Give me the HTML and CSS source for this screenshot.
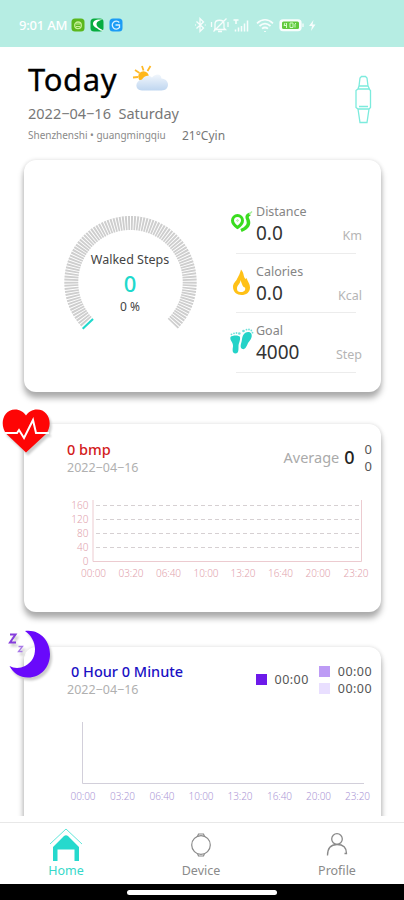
FILE: index.html
```html
<!DOCTYPE html>
<html lang="en">
<head>
<meta charset="utf-8">
<title>Today</title>
<link rel="stylesheet" href="styles.css">
</head>
<body>
<div class="phone">
  <header class="status">
    <span class="clock">9:01 AM</span>
    <svg class="apps" width="52" height="14" viewBox="0 0 52 14">
      <rect x=".5" y=".5" width="13" height="13" rx="3.5" fill="#5bb71d"/><circle cx="7" cy="7.3" r="3.3" fill="none" stroke="#c8f09a" stroke-width="1.3"/><path d="M5 6h4M5 8.5h4" stroke="#c8f09a"/>
      <rect x="19.500" y=".5" width="13" height="13" rx="3.500" fill="#06ac3f"/><path d="M31.500 1.500C24 1 22 3 22 6c0 3 4 3.500 5.500 5.500 2 1.500 4 1.500 5 1-5-2.500-7-4-7-6.500 0-2.500 3-3.500 6-4.500z" fill="#fff"/>
      <rect x="38.500" y=".5" width="13" height="13" rx="3.500" fill="#1c9cf5"/><path d="M48.300 4.500a4 4 0 1 0 0 5.200M44.500 7h4v3" fill="none" stroke="#d6f0ff" stroke-width="1.300"/>
    </svg>
    <svg class="signals" width="124" height="16" viewBox="0 0 124 16" fill="none" stroke="#fff" stroke-width="1.300">
      <path d="M2.500 4.500l7 6.500-3.500 3.500v-13l3.500 3.500-7 6.500M1 8h.8M10.800 8h.8"/>
      <path d="M21 12.500V7c0-5 9-5 9 0v4l1.500 1.500H20M24 14.500h4M19.500 14.500l13-13M17.500 5v5M34 5v5"/>
      <path d="M39.500 3h5M42 3v4M47.500 14.500V9M44.500 14.500v-4M41.500 14.500v-2M50.500 14.500V6.500M53.500 14.500v-11" stroke-width="1.500"/>
      <path d="M63 6.300c5-4.500 11-4.500 16 0M65.500 9c3.500-3 7.500-3 11 0M68 11.700c2-1.600 4-1.600 6 0M71 14v1" stroke-width="1.700"/>
      <rect x="86" y="3" width="21" height="10.500" rx="3" fill="#fff"/><rect x="88" y="4.500" width="17" height="7.500" rx="1.500" fill="#58c62c" stroke="none"/><path d="M91 6l-1 2.500h3M92.500 6v5M96 6h3v4.500h-3zM101 10.500V7l1-1" stroke="#d7ffc5" stroke-width="1"/><path d="M109 6.500v3.500"/>
      <path d="M119.500 3l-4.500 6h3l-1 5 4.500-6.500h-3z" fill="#fff" stroke="none"/>
    </svg>
  </header>

  <section class="hero">
    <div>
      <div class="title-row"><h1>Today</h1>
        <svg width="38" height="28" viewBox="0 0 38 28">
          <defs><linearGradient id="cloud" x2="0" y2="1"><stop stop-color="#f1f6fc"/><stop offset="1" stop-color="#bfd6f0"/></linearGradient></defs>
          <g stroke="#ffb928" stroke-width="1.800"><path d="M1 12.500l5-.5M3 5l4.500 3M10 1l1.500 4.500M18.500 1l-3 5"/></g>
          <circle cx="11.500" cy="11.500" r="5.300" fill="#ffb71b"/>
          <path d="M10 25.500c-7.500 0-7.500-10 0-11 2-4 7-5 10-2 5-5 9-3 9.500 1 8.500 .5 9 12 0 12z" fill="url(#cloud)"/>
        </svg>
      </div>
      <div class="date">2022−04−16&nbsp; Saturday</div>
      <div class="place"><span class="town">Shenzhenshi • guangmingqiu</span><span class="temp">21°Cyin</span></div>
    </div>
    <svg class="band" width="18" height="50" viewBox="0 0 18 50" fill="none" stroke="#7cebdd" stroke-width="1.300">
      <path d="M5 11l1-8 1.500-1.500h4L13 3l1 8M4 14L5 11h9l1.500 3M2 15.500L4 14h11l1.500 1.500v17L15 34H4l-2-1.500zM4 34l2 13.500h7L15 34M5 31.500h9"/>
    </svg>
  </section>

  <main>
    <section class="card steps">
      <div class="gauge">
        <svg width="136" height="136" viewBox="0 0 136 136" fill="none" stroke-width="14">
          <path d="M26.300 109.700A59.200 59.200 0 1 1 110.700 109.700" pathLength="1000" stroke="#cecece" stroke-dasharray="6.700 3.333"/>
          <path d="M20.700 114.700L31 105" stroke="#fff" stroke-width="4"/>
          <path d="M20.700 114.700L31 105" stroke="#20d9cc" stroke-width="2.200"/>
        </svg>
        <div class="gauge-text"><span class="walked">Walked Steps</span><b>0</b><span class="percent">0 %</span></div>
      </div>
      <div class="metrics">
        <div class="metric">
          <svg width="24" height="28" viewBox="0 0 24 28" fill="none" stroke="#39dc1e" stroke-width="3"><path d="M7.500 18.500C4 16 2.500 14 2.500 11.500a5 5 0 0 1 10 0C12.500 14 11 16 7.500 18.500z"/><circle cx="7.500" cy="11.500" r=".8" stroke-width="1" stroke="#9af089"/><path d="M20 5c-3.500 1.500-3.500 3-2 6 2 5-1 8-7 10.500" stroke-width="3.400"/><path d="M22 2.500l-3 3" stroke="#a5ee98" stroke-width="1.500"/></svg>
          <div class="metric-body"><span>Distance</span><div><strong>0.0</strong><em>Km</em></div></div>
        </div>
        <div class="metric">
          <svg width="24" height="28" viewBox="0 0 24 28"><path fill="#ffc117" fill-rule="evenodd" d="M11 .5c3.500 4 2 7 4.500 9.500l1-1C18 13 20 15 20 18.500c0 5-4 7.500-8.500 7.500S3 23 3 18c0-4 3-5.500 4-8 1-2 2.500-4 4-9.500zM10.500 11c0 4-3.500 5-3.500 8.500s2.500 3.500 4.500 3.500 4.500-1.500 3.500-4.500c-2 0-3-3-4.500-7.500z"/></svg>
          <div class="metric-body"><span>Calories</span><div><strong>0.0</strong><em>Kcal</em></div></div>
        </div>
        <div class="metric">
          <svg width="24" height="28" viewBox="0 0 24 28" fill="#24d3c8"><path d="M.5 9c2-2 8.500-2 9.500 0 .5 4-1.500 6-1.500 9.500 0 4 0 7-3 7-3.500 0-3-4-2.500-7C3.500 14-.5 13 .5 9zM13 7.500c2-4 7-4.500 8.500-1.500 1 4-1.500 6-3.500 9-1 3-3 7-5.500 6-3-1-1.500-5-1-7 .5-2 .5-4.500 1.500-6.500z"/><g opacity=".65"><circle cx="1.500" cy="6.300" r=".9"/><circle cx="4" cy="5.300" r=".9"/><circle cx="6.500" cy="5" r=".9"/><circle cx="9.300" cy="5.500" r="1.300"/><circle cx="13.500" cy="3" r="1.300"/><circle cx="16.500" cy="1.700" r=".9"/><circle cx="19" cy="1.500" r=".9"/><circle cx="21.300" cy="2.500" r=".9"/><circle cx="22.500" cy="4.700" r=".9"/></g></svg>
          <div class="metric-body"><span>Goal</span><div><strong>4000</strong><em>Step</em></div></div>
        </div>
      </div>
    </section>

    <section class="card heart">
      <svg class="badge heart-badge" width="54" height="50" viewBox="0 0 54 50">
        <path d="M26 44.500L6.500 26C-1 17 3 1.500 15 1.500c5 0 8.500 2.500 11 6 2.500-3.500 6-6 11-6 12 0 16.500 14.500 9 24.500z" fill="#fe0505"/>
        <path d="M5 25h12l2-3 5 8 9-18 3 13h13" fill="none" stroke="#fff" stroke-width="2"/>
      </svg>
      <div class="card-head">
        <div><h2>0 bmp</h2><div class="sub">2022−04−16</div></div>
        <div class="average"><span>Average</span><b>0</b><div class="pair"><i>0</i><i>0</i></div></div>
      </div>
      <svg class="heart-chart" width="320" height="90" viewBox="0 0 320 90">
        <g stroke="#d6d0d2" stroke-width="1" stroke-dasharray="4 3"><path d="M46 9.500h265M46 23.500h265M46 37.500h265M46 51.500h265"/></g>
        <path d="M43 4v61.500h268.500V4" fill="none" stroke="#eccbd0"/>
        <g class="axis y"><text x="38.500" y="13">160</text><text x="38.500" y="27">120</text><text x="38.500" y="41">80</text><text x="38.500" y="55">40</text><text x="38.500" y="68.500">0</text></g>
        <g class="axis"><text x="43.500" y="81" textLength="25">00:00</text><text x="81" y="81" textLength="25">03:20</text><text x="118.500" y="81" textLength="25">06:40</text><text x="156" y="81" textLength="25">10:00</text><text x="193" y="81" textLength="25">13:20</text><text x="230.500" y="81" textLength="25">16:40</text><text x="268" y="81" textLength="25">20:00</text><text x="306" y="81" textLength="25">23:20</text></g>
      </svg>
    </section>

    <section class="card sleep">
      <svg class="badge moon-badge" width="50" height="52" viewBox="0 0 50 52">
        <path d="M19 2C34 0 44 12 44 25C44 38 35 48.500 22 48.500C14 48.500 7 44 3.500 37C8 39.500 14 39.500 19 37C26 33 29 28 29 20C29 13 25 6 19 2z" fill="#6909fb"/>
        <g fill="none" stroke="#853ddc"><path d="M4 5.500h5.500l-5.500 8H10" stroke-width="2"/><path d="M12.500 17.500h4l-4 5h4" stroke="#a878e6" stroke-width="1.300"/></g>
      </svg>
      <div class="card-head">
        <div><h2>0 Hour 0 Minute</h2><div class="sub">2022−04−16</div></div>
        <div class="legend"><span class="key deep">00:00</span><div><span class="key light">00:00</span><span class="key awake">00:00</span></div></div>
      </div>
      <svg class="sleep-chart" width="320" height="90" viewBox="0 0 320 90">
        <path d="M32.500 3v61.500H314" fill="none" stroke="#d2cfda"/>
        <g class="axis"><text x="33" y="80.500" textLength="25">00:00</text><text x="72.500" y="80.500" textLength="25">03:20</text><text x="112" y="80.500" textLength="25">06:40</text><text x="151" y="80.500" textLength="25">10:00</text><text x="190" y="80.500" textLength="25">13:20</text><text x="229.500" y="80.500" textLength="25">16:40</text><text x="268.500" y="80.500" textLength="25">20:00</text><text x="307.500" y="80.500" textLength="25">23:20</text></g>
      </svg>
    </section>
  </main>

  <nav>
    <a class="active"><svg width="34" height="36" viewBox="0 0 34 36"><path d="M1 17L17 2l16 15" fill="none" stroke="#62e7db" stroke-width="1"/><path d="M4 20L15 9q2-1.500 4 0l11 11v14h-4.500V22.500H8.500V34H4z" fill="#25d9cd"/></svg><span>Home</span></a>
    <a><svg width="34" height="36" viewBox="0 0 34 36" fill="none" stroke="#8a8a8a" stroke-width="1.200"><circle cx="17" cy="18" r="9.300"/><path d="M13.500 9.500L14.500 7h5l1 2.500M13.500 26.500l1 2.500h5l1-2.500"/></svg><span>Device</span></a>
    <a><svg width="34" height="36" viewBox="0 0 34 36" fill="none" stroke="#8a8a8a" stroke-width="1.300"><circle cx="17" cy="12" r="5.300"/><path d="M7.500 28.500c0-7 3.500-11 9.500-11s9.500 3 9.500 9h-2"/></svg><span>Profile</span></a>
  </nav>
  <footer><div class="handle"></div></footer>
</div>
</body>
</html>
```
FILE: styles.css
```css
* { box-sizing: border-box; }
body { margin: 0; background: #fff; font-family: "Noto Sans", sans-serif; }
svg { display: block; flex: none; overflow: visible; }
h1, h2 { margin: 0; font-weight: 500; }
em, i { font-style: normal; }
.phone { width: 404px; height: 900px; display: flex; flex-direction: column; overflow: hidden; }
.status { flex: none; height: 47px; background: #b6ede3; display: flex; align-items: center; padding: 3px 0 0 19px; }
.clock { width: 52px; color: #fff; font-size: 13px; font-weight: 500; white-space: nowrap; letter-spacing: -.2px; }
.signals { margin-left: 71px; opacity: .9; }

.hero { flex: none; height: 107px; padding: 12px 31px 0 28px; display: flex; justify-content: space-between; }
.title-row { display: flex; gap: 16px; height: 41px; }
h1 { font-size: 31px; line-height: 40px; font-weight: 400; letter-spacing: .6px; -webkit-text-stroke: .3px #000; }
.title-row svg { margin: 6px 0 0 -1px; }
.date { height: 26px; font-size: 14.5px; line-height: 26px; color: #777; white-space: nowrap; }
.place { display: flex; font-size: 10px; line-height: 19px; color: #8a8a8a; white-space: nowrap; }
.town { width: 154px; letter-spacing: -.02px; }
.temp { font-size: 12px; color: #777; }
.band { margin-top: 16px; margin-right: 1px; }

main { flex: none; height: 662px; overflow: hidden; padding: 6px 23px 0 24px; display: flex; flex-direction: column; }
.card { flex: none; position: relative; border-radius: 12px; background: #fff; box-shadow: 0 6px 6px #aaa, 0 0 4px #ddd; }
.steps { height: 232px; display: flex; }
.gauge { width: 136px; height: 136px; margin: 54px 0 0 38px; display: grid; }
.gauge > * { grid-area: 1 / 1; }
.gauge-text { display: flex; flex-direction: column; align-items: center; padding-top: 37px; color: #444; }
.walked { font-size: 12.5px; line-height: 18px; white-space: nowrap; }
.gauge-text b { font-size: 22px; line-height: 29px; font-weight: 500; color: #20d9cc; }
.percent { font-size: 12px; line-height: 18px; }
.metrics { margin: 34px 0 0 32px; width: 133px; }
.metric { height: 59.500px; display: flex; align-items: flex-start; gap: 2px; background: linear-gradient(#ececec, #ececec) 6px 100% / 120px 1px no-repeat; }
.metric > svg { margin-top: 15px; }
.metric-body { width: 106px; flex: none; padding-top: 9px; color: #858585; font-size: 12.500px; line-height: 17px; }
.metric-body > div { display: flex; justify-content: space-between; align-items: baseline; line-height: 26px; }
.metric-body strong { font-size: 19px; font-weight: 400; color: #333; }
.metric-body em { color: #b5b5b5; font-size: 12.500px; }

.heart { height: 188px; margin-top: 32px; }
.badge { position: absolute; filter: drop-shadow(2px 3px 1px #ccc); }
.heart-badge { left: -24.500px; top: -16px; }
.moon-badge { left: -18px; top: -18px; }
.card-head { height: 72px; padding: 15px 9px 0 43px; display: flex; justify-content: space-between; }
h2 { font-size: 14.500px; line-height: 20px; white-space: nowrap; }
.heart h2 { color: #d31a20; }
.sleep h2 { color: #1a10c4; padding-left: 4px; }
.sub { font-size: 12.500px; line-height: 17px; color: #b0b0b0; }
.average { display: flex; align-items: flex-start; color: #aaa; font-size: 14.500px; line-height: 36px; }
.average b { margin-left: 5px; color: #222; font-weight: 500; font-size: 18px; }
.pair { margin-left: 10px; display: flex; flex-direction: column; font-size: 13px; line-height: 17px; color: #555; padding-top: 2px; }
.axis { font-size: 10px; font-weight: 300; fill: #dfa3ae; text-anchor: middle; }
.axis.y { text-anchor: end; }
.heart-chart, .sleep-chart { margin-left: 26px; }
.sleep { height: 190px; margin-top: 35px; }
.sleep .card-head { padding-top: 14px; }
.sleep .sub { line-height: 18px; }
.sleep .axis { fill: #ad98d6; }
.legend { display: flex; align-items: center; gap: 10px; height: 37px; font-size: 12.500px; line-height: 17px; color: #555; letter-spacing: .45px; }
.key { display: flex; align-items: center; gap: 8px; }
.key::before { content: ""; width: 11px; height: 11px; background: #6d1aea; }
.light::before { background: #bd9bf5; }
.awake::before { background: #e9dfff; }

nav { flex: none; height: 68px; padding-top: 6px; display: grid; grid-template-columns: 132px 138px 134px; background: #fff linear-gradient(#e8e8e8, #e8e8e8) 0 6px / 100% 1px no-repeat; }
nav a { display: flex; flex-direction: column; align-items: center; padding-top: 5px; font-size: 12.500px; line-height: 16px; color: #8a8a8a; }
nav .active { color: #35d8c9; }
footer { flex: none; height: 16px; background: #000; display: flex; justify-content: center; }
.handle { width: 150px; height: 5px; margin-top: 6px; border-radius: 3px; background: #fff; }
```
